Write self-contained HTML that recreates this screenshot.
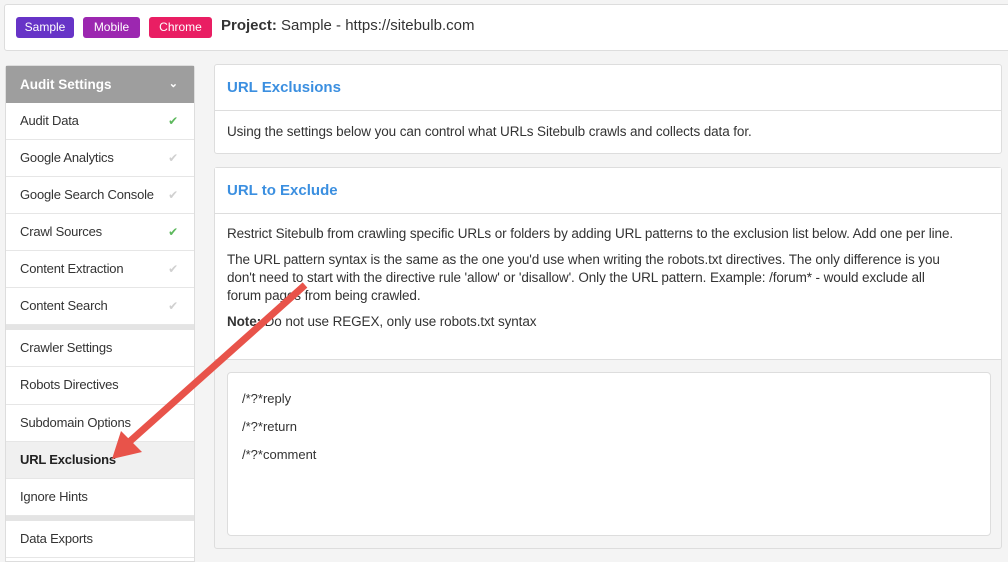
<html><head><style>
body{margin:0;width:1008px;height:555px;background:#f4f4f4;font-family:"Liberation Sans",sans-serif;position:relative;overflow:hidden;color:#333}
.top{position:absolute;left:4px;top:4px;width:1010px;height:45px;background:#fff;border:1px solid #ddd;border-radius:3px}
.b{position:absolute;top:12px;height:21px;line-height:21px;color:#fff;font-size:12px;text-align:center;border-radius:3px}
.side{position:absolute;left:5px;top:65px;width:188px;height:495px;background:#fff;border:1px solid #ddd;border-radius:3px 3px 0 0}
.hd{height:37px;background:#9e9e9e;color:#fff;font-weight:bold;font-size:13.5px;line-height:37px;padding-left:14px;position:relative}
.it{height:36px;border-bottom:1px solid #e6e6e6;font-size:13px;line-height:36px;padding-left:14px;position:relative;letter-spacing:-0.2px}
.ck{position:absolute;right:16px;top:0;font-size:12px;color:#d0d0d0}
.g{color:#5cb85c}
.gap{height:5px;background:#e4e4e4}
.p{position:absolute;left:214px;width:786px;background:#fff;border:1px solid #ddd;border-radius:3px}
.ph{height:45px;border-bottom:1px solid #ddd;color:#3b8fe0;font-size:15px;font-weight:bold;line-height:45px;padding-left:12px}
.t{font-size:13.5px;padding:0 12px;line-height:18px;letter-spacing:-0.1px;white-space:nowrap}
</style></head><body>
<div class="top">
<div class="b" style="left:11px;width:58px;background:#6734c7">Sample</div>
<div class="b" style="left:78px;width:57px;background:#9c27b0">Mobile</div>
<div class="b" style="left:144px;width:63px;background:#e91e63">Chrome</div>
<div style="position:absolute;left:216px;top:12px;font-size:15px"><b>Project:</b> Sample - https://sitebulb.com</div>
</div>
<div class="side">
<div class="hd">Audit Settings<span style="position:absolute;right:16px;font-size:11px">&#8964;</span></div>
<div class="it">Audit Data<span class="ck g">✔</span></div>
<div class="it">Google Analytics<span class="ck">✔</span></div>
<div class="it">Google Search Console<span class="ck">✔</span></div>
<div class="it">Crawl Sources<span class="ck g">✔</span></div>
<div class="it">Content Extraction<span class="ck">✔</span></div>
<div class="it">Content Search<span class="ck">✔</span></div>
<div class="gap"></div>
<div class="it">Crawler Settings</div>
<div class="it" style="height:37px">Robots Directives</div>
<div class="it">Subdomain Options</div>
<div class="it" style="background:#f0f0f0;font-weight:bold;color:#222">URL Exclusions</div>
<div class="it">Ignore Hints</div>
<div class="gap"></div>
<div class="it">Data Exports</div>
</div>
<div class="p" style="top:64px;height:88px"><div class="ph">URL Exclusions</div><div class="t" style="margin-top:12px">Using the settings below you can control what URLs Sitebulb crawls and collects data for.</div></div>
<div class="p" style="top:167px;height:380px;background:#f4f4f4">
<div class="ph" style="background:#fff">URL to Exclude</div>
<div style="background:#fff;height:146px;border-bottom:1px solid #ddd;padding-top:11px;box-sizing:border-box">
<div class="t">Restrict Sitebulb from crawling specific URLs or folders by adding URL patterns to the exclusion list below. Add one per line.</div>
<div class="t" style="margin-top:8px">The URL pattern syntax is the same as the one you'd use when writing the robots.txt directives. The only difference is you<br>don't need to start with the directive rule 'allow' or 'disallow'. Only the URL pattern. Example: /forum* - would exclude all<br>forum pages from being crawled.</div>
<div class="t" style="margin-top:8px"><b>Note:</b> Do not use REGEX, only use robots.txt syntax</div>
</div>
<div style="position:absolute;left:12px;top:204px;width:762px;height:162px;background:#fff;border:1px solid #ddd;border-radius:4px;font-size:13px">
<div style="position:absolute;left:14px;top:18px">/*?*reply</div>
<div style="position:absolute;left:14px;top:46px">/*?*return</div>
<div style="position:absolute;left:14px;top:74px">/*?*comment</div>
</div></div>
<svg style="position:absolute;left:0;top:0" width="1008" height="555"><g fill="#e8534a">
<line x1="305" y1="285" x2="128" y2="443" stroke="#e8534a" stroke-width="7"/>
<polygon points="112,459 121,431 142,452"/></g></svg>
</body></html>
